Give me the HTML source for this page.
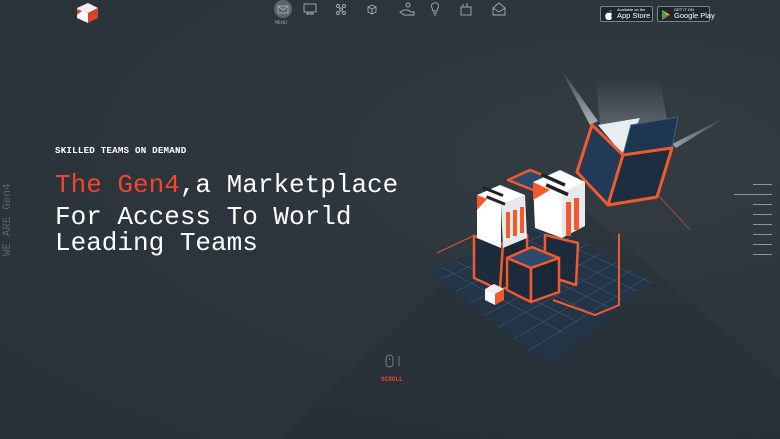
<!DOCTYPE html>
<html><head><meta charset="utf-8"><style>
*{margin:0;padding:0;box-sizing:border-box}
body{width:780px;height:439px;overflow:hidden;background:#2a323a;font-family:"Liberation Mono",monospace;position:relative}
.bg{position:absolute;inset:0;background:radial-gradient(ellipse at 620px 160px,#343c44 0%,#2d353d 40%,#283038 100%)}
.t{position:absolute;color:#fff;white-space:nowrap}
.h{font-size:26px;left:55px}
.sub{left:55px;top:145px;font-size:9.2px;font-weight:bold;letter-spacing:.2px}
.vert{position:absolute;left:-28px;top:214px;transform:rotate(-90deg);color:#5b646c;font-size:11px;white-space:nowrap;width:72px}
.btn{position:absolute;top:6px;height:16px;border:1px solid #7b8288;border-radius:2px;background:#1e252b;color:#fff;font-family:"Liberation Sans",sans-serif;white-space:nowrap}
.btn small{position:absolute;left:16px;top:1px;font-size:4px;line-height:4px}
.btn b{position:absolute;left:16px;top:5px;font-size:7.5px;line-height:8px;font-weight:normal}
.menu{position:absolute;left:275px;top:20px;font-size:5px;color:#9aa0a6}
.scroll{position:absolute;left:381px;top:376px;font-size:6px;color:#e0482e;font-weight:bold}
.rl{position:absolute;height:1px;background:#8d949a}
</style></head><body>
<div class="bg"></div>
<svg style="position:absolute;left:0;top:0" width="780" height="439">
<defs>
<linearGradient id="ray" x1="0" y1="1" x2="0" y2="0"><stop offset="0" stop-color="#dfe8ee" stop-opacity=".7"/><stop offset="1" stop-color="#dfe8ee" stop-opacity="0"/></linearGradient>
<linearGradient id="ray2" x1="0" y1="0" x2="1" y2="0"><stop offset="0" stop-color="#dfe8ee" stop-opacity=".6"/><stop offset="1" stop-color="#dfe8ee" stop-opacity="0"/></linearGradient>
</defs>
<polygon points="280,439 550,180 780,380 780,439" fill="#262d34" opacity=".35"/>
<!-- logo -->
<polygon points="77,8 88,3 98,8 88,13" fill="#eee"/>
<polygon points="77,8 88,13 88,23 77,18" fill="#fff"/>
<polygon points="88,13 98,8 98,18 88,23" fill="#d9432b"/>
<polygon points="77,9 82,11 77,15" fill="#d9432b"/>
<!-- nav icons -->
<circle cx="283" cy="9" r="9" fill="#5d656c"/>
<g fill="none" stroke="#a8aeb3" stroke-width=".9">
<rect x="278" y="6" width="10" height="7"/><path d="M278 6l5 4 5-4"/>
<rect x="304" y="4" width="12" height="8"/><path d="M308 12v2h4v-2M306 14h8"/>
<circle cx="338" cy="6" r="1.5"/><circle cx="344" cy="6" r="1.5"/><circle cx="338" cy="13" r="1.5"/><circle cx="344" cy="13" r="1.5"/><circle cx="341" cy="9.5" r="1.5"/>
<path d="M368 7l4-2 4 2v5l-4 2-4-2z M368 7l4 2 4-2M372 9v5"/>
<circle cx="408" cy="5" r="2"/><path d="M400 12l4-2h4l3 2h3v3h-10z"/>
<path d="M432 8a3.5 3.5 0 1 1 6 0l-1 3h-4z M433 13h4M434 15h2"/>
<rect x="461" y="7" width="10" height="8"/><path d="M463 7V4M467 7V3"/>
<path d="M493 8l6-5 6 5v7h-12z M493 8l6 4 6-4"/>
</g>
<!-- floor -->
<polygon points="427,273 545,222 653,282 550,366" fill="#223549" opacity=".85"/>
<g stroke="#3e5a73" stroke-width=".6">
<path d="M441,267 564,333 M456,261 578,322 M471,254 593,314 M486,248 608,307 M501,241 622,299 M516,235 637,291 M531,228 652,283"/>
<path d="M441,279 559,228 M456,291 573,236 M470,303 588,244 M485,315 602,253 M499,327 617,262 M514,339 632,270 M528,351 646,278"/>
</g>
<!-- light rays -->
<polygon points="560,68 590,125 598,121" fill="url(#ray)"/>
<polygon points="596,80 660,80 672,148 600,125" fill="url(#ray)" opacity=".5"/>
<polygon points="676,148 730,115 672,144" fill="url(#ray2)"/>
<line x1="640" y1="175" x2="690" y2="230" stroke="#c9512f" stroke-width="1" opacity=".7"/>
<line x1="437" y1="253" x2="475" y2="235" stroke="#e0532e" stroke-width="1"/>
<!-- open cube -->
<polygon points="598,125 640,118 623,155" fill="#e9edf0"/>
<polygon points="631,125 678,117 672,148 623,155" fill="#1f3650" stroke="#3d5f85" stroke-width="1"/>
<polygon points="592,125 623,155 608,205 577,172" fill="#223a56" stroke="#f05a2e" stroke-width="3" stroke-linejoin="round"/>
<polygon points="623,155 672,148 657,197 608,205" fill="#1c2d40" stroke="#f05a2e" stroke-width="3" stroke-linejoin="round"/>
<!-- lower cubes -->
<g stroke="#f05a2e" stroke-width="2.5" stroke-linejoin="round">
<polygon points="474,236 503,244 500,290 474,278" fill="#1d2c3c"/>
<polygon points="503,244 527,235 527,280 500,290" fill="#1a2736"/>
<polygon points="545,235 578,243 576,285 545,275" fill="#1d2c3c"/>
<polygon points="507,258 532,247 559,258 531,268" fill="#2a4a6e"/>
<polygon points="507,258 531,268 531,302 507,290" fill="#1d2c3c"/>
<polygon points="531,268 559,258 559,292 531,302" fill="#1a2736"/>
<polygon points="508,180 530,170 555,180 533,190" fill="#2a4a6e"/>
</g>
<path d="M619,234 V305 L595,315 L553,300" fill="none" stroke="#f05a2e" stroke-width="2"/>
<!-- white cubes -->
<polygon points="477,195 500,185 525,195 501,205" fill="#fff"/>
<polygon points="477,195 501,205 501,248 477,238" fill="#fff"/>
<polygon points="501,205 525,195 527,238 503,248" fill="#e7e9eb"/>
<polygon points="477,195 487,199 477,210" fill="#f05a2e"/>
<g fill="#222" ><rect x="482" y="190" width="22" height="3" transform="rotate(22 493 191)"/><rect x="486" y="199" width="20" height="3" transform="rotate(22 496 200)"/></g>
<g fill="#f05a2e"><rect x="506" y="212" width="4" height="26"/><rect x="513" y="210" width="4" height="26"/><rect x="520" y="207" width="4" height="26"/></g>
<polygon points="533,182 560,170 585,182 562,194" fill="#fff"/>
<polygon points="533,182 562,194 562,238 535,228" fill="#fff"/>
<polygon points="562,194 585,182 585,226 562,238" fill="#e7e9eb"/>
<polygon points="533,182 550,190 533,200" fill="#f05a2e"/>
<g fill="#222"><rect x="540" y="178" width="26" height="3.5" transform="rotate(24 553 180)"/><rect x="545" y="188" width="24" height="3.5" transform="rotate(24 557 190)"/></g>
<g fill="#f05a2e"><rect x="566" y="202" width="5" height="34"/><rect x="574" y="198" width="5" height="32"/></g>
<!-- tiny cube -->
<polygon points="485,289 494,284 504,289 495,294" fill="#eee"/>
<polygon points="485,289 495,294 495,305 485,300" fill="#fff"/>
<polygon points="495,294 504,289 504,300 495,305" fill="#f05a2e"/>
<!-- mouse -->
<rect x="386" y="355" width="7" height="12" rx="3.5" fill="none" stroke="#8a9197" stroke-width=".8"/>
<line x1="389.5" y1="358" x2="389.5" y2="360" stroke="#8a9197" stroke-width=".8"/>
<line x1="399" y1="356" x2="399" y2="366" stroke="#8a9197" stroke-width=".8"/>
</svg>
<div class="menu">MENU</div>
<div class="btn" style="left:600px;width:53px"><svg style="position:absolute;left:4px;top:3px" width="8" height="10"><path d="M4 2c1-2 3-2 3-2M1 4c1-2 3-1 3-1s2-1 3 1c-1 1-1 3 0 4-1 2-2 2-3 2s-2 0-3-1C0 7 0 5 1 4z" fill="#fff"/></svg><small>Available on the</small><b>App Store</b></div>
<div class="btn" style="left:657px;width:53px"><svg style="position:absolute;left:4px;top:3px" width="9" height="10"><polygon points="0,0 8,5 0,10" fill="#2fb4e8"/><polygon points="0,0 5,5 0,10" fill="#34a853"/><polygon points="5,5 8,5 0,10" fill="#ea4335"/><polygon points="5,5 8,5 0,0" fill="#fbbc04"/></svg><small>GET IT ON</small><b>Google Play</b></div>
<div class="t sub">SKILLED TEAMS ON DEMAND</div>
<div class="t h" style="top:170px"><span style="color:#f0462d">The Gen4</span>,a Marketplace</div>
<div class="t h" style="top:202px">For Access To World</div>
<div class="t h" style="top:228px">Leading Teams</div>
<div class="vert">WE ARE Gen4</div>
<div class="rl" style="left:753px;top:184px;width:19px"></div>
<div class="rl" style="left:734px;top:194px;width:38px"></div>
<div class="rl" style="left:753px;top:204px;width:19px"></div>
<div class="rl" style="left:753px;top:214px;width:19px"></div>
<div class="rl" style="left:753px;top:224px;width:19px"></div>
<div class="rl" style="left:753px;top:234px;width:19px"></div>
<div class="rl" style="left:753px;top:244px;width:19px"></div>
<div class="rl" style="left:753px;top:254px;width:19px"></div>
<div class="scroll">SCROLL</div>
</body></html>
